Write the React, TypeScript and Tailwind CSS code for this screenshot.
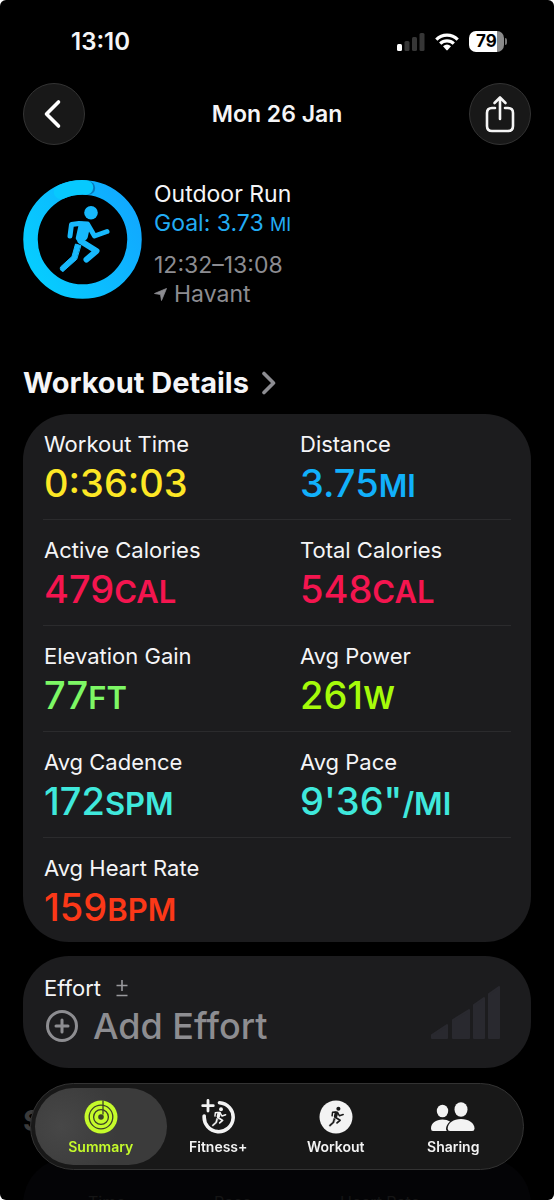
import React from "react";

const METRICS = [
  { label: "Workout Time", value: "0:36:03", unit: "", color: "text-[#fde725]" },
  { label: "Distance", value: "3.75", unit: "MI", color: "text-[#11b0fb]" },
  { label: "Active Calories", value: "479", unit: "CAL", color: "text-[#f4154f]" },
  { label: "Total Calories", value: "548", unit: "CAL", color: "text-[#f4154f]" },
  { label: "Elevation Gain", value: "77", unit: "FT", color: "text-[#7df765]" },
  { label: "Avg Power", value: "261", unit: "W", color: "text-[#a6fb0a]" },
  { label: "Avg Cadence", value: "172", unit: "SPM", color: "text-[#3fe8dc]" },
  { label: "Avg Pace", value: "9'36\"", unit: "/MI", color: "text-[#3fe8dc]" },
  { label: "Avg Heart Rate", value: "159", unit: "BPM", color: "text-[#fb3818]" },
];

function Runner() {
  return (
    <g fill="none" stroke="currentColor" strokeLinecap="round" strokeLinejoin="round">
      <circle cx="68" cy="32.700" r="6.800" fill="currentColor" stroke="none" />
      <path d="M47 56 L48.500 44.500 L56 43.500 L64.500 44 L71.500 56 L84 51.500" strokeWidth="5" />
      <path d="M58.500 44.500 L64.500 46 L62 57 L57.500 60.500 L55.500 58 Z" strokeWidth="5.500" fill="currentColor" />
      <path d="M57.500 61 L73.500 71 L63.500 79.500" strokeWidth="6" />
      <path d="M57.500 65.500 L52.500 64 L49 76.500 L37.500 87 Q36.500 90.500 40 91.500 L53.500 79.500 Z" strokeWidth="1" fill="currentColor" />
    </g>
  );
}

function StatusBar() {
  return (
    <div className="flex h-[83px] items-center justify-between pr-[47px] pl-[71px]">
      <span className="text-[24px] font-semibold">13:10</span>
      <div className="flex items-center gap-[10px]">
        <svg width="28" height="20" viewBox="0 0 28 20" aria-label="Mobile signal">
          <rect x="0" y="12" width="5" height="7" rx="1.500" fill="#fff" />
          <g fill="#363636">
            <rect x="7.500" y="9" width="5" height="10" rx="1.500" />
            <rect x="15" y="5" width="5" height="14" rx="1.500" />
            <rect x="22.500" y="1" width="5" height="18" rx="1.500" />
          </g>
        </svg>
        <svg width="24" height="18" viewBox="0 0 24 18" aria-label="Wi-Fi">
          <g fill="none" stroke="#fff" strokeWidth="3.200">
            <path d="M1.300 6.600 A15.200 15.200 0 0 1 22.700 6.600" />
            <path d="M5.200 10.600 A9.700 9.700 0 0 1 18.800 10.600" />
          </g>
          <path d="M8 13.300 Q12 9.800 16 13.300 L12.700 17.100 Q12 17.700 11.300 17.100 Z" fill="#fff" />
        </svg>
        <div className="flex items-center gap-px" aria-label="Battery 79 percent">
          <div className="flex h-[21px] w-[35px] items-center justify-center rounded-[7px] bg-[linear-gradient(90deg,#fff_79%,#8a8a8a_79%)] text-[17px] font-bold text-black">
            79
          </div>
          <div className="h-[7px] w-[2px] rounded-r-full bg-[#777]" />
        </div>
      </div>
    </div>
  );
}

function Header() {
  const round =
    "flex size-[62px] items-center justify-center rounded-full border border-[#333] bg-[#181818]";
  return (
    <header className="flex items-center justify-between">
      <button type="button" aria-label="Back" className={round}>
        <svg width="20" height="32" viewBox="0 0 20 32" className="mr-[4px]">
          <path d="M16.500 4 L4.500 16 L16.500 28" fill="none" stroke="#fff" strokeWidth="3.600" strokeLinecap="round" strokeLinejoin="round" />
        </svg>
      </button>
      <h1 className="text-[23px] font-semibold">Mon 26 Jan</h1>
      <button type="button" aria-label="Share" className={round}>
        <svg width="30" height="38" viewBox="0 0 30 38" fill="none" stroke="#f5f5f5" strokeWidth="2.600" strokeLinecap="round" strokeLinejoin="round">
          <path d="M10 13 H7 Q2 13 2 18 V31 Q2 36 7 36 H23 Q28 36 28 31 V18 Q28 13 23 13 H20" />
          <path d="M15 24 V2.500 M9.500 8 L15 2.500 L20.500 8" />
        </svg>
      </button>
    </header>
  );
}

function WorkoutSummary() {
  return (
    <section className="mt-[35px] flex gap-[12px]">
      <svg viewBox="0 0 119 119" className="size-[119px] shrink-0 text-[#17b9fd]" aria-label="Goal completed">
        <defs>
          <linearGradient id="ring" x1="0" y1=".7" x2="1" y2=".2">
            <stop offset="0" stopColor="#06ccff" />
            <stop offset="1" stopColor="#11a9ff" />
          </linearGradient>
        </defs>
        <circle cx="59.500" cy="59.500" r="52" fill="none" stroke="url(#ring)" strokeWidth="14.500" />
        <circle cx="65.500" cy="8" r="6.700" fill="#0879bd" />
        <path d="M38 12 A52 52 0 0 1 63 7.500" fill="none" stroke="#07c9fe" strokeWidth="14.500" strokeLinecap="round" />
        <Runner />
      </svg>
      <div className="text-[23px] leading-[29px]">
        <p>Outdoor Run</p>
        <p className="text-[#22acf4]">
          Goal: 3.73 <span className="text-[18px]">MI</span>
        </p>
        <p className="mt-[12px] text-[#8c8c91]">12:32–13:08</p>
        <p className="flex items-center gap-[7px] text-[#8c8c91]">
          <svg width="13" height="13" viewBox="0 0 13 13" aria-hidden="true">
            <path d="M12.500 0.500 L7.500 12.500 L6.500 6.500 L0.500 5.500 Z" fill="currentColor" stroke="currentColor" strokeWidth=".8" strokeLinejoin="round" />
          </svg>
          Havant
        </p>
      </div>
    </section>
  );
}

function WorkoutDetails() {
  return (
    <section className="mt-[57px]">
      <h2 className="text-[29px] leading-[34px] font-bold">
        <a href="#details" className="flex items-center gap-[13px]">
          Workout Details
          <svg width="14" height="24" viewBox="0 0 14 24" aria-hidden="true">
            <path d="M2 2.500 L11.500 12 L2 21.500" fill="none" stroke="#8d8d92" strokeWidth="3.600" strokeLinecap="round" strokeLinejoin="round" />
          </svg>
        </a>
      </h2>
      <dl className="mt-[14px] grid grid-cols-2 rounded-[46px] bg-[#1c1c1e] px-[20px]">
        {METRICS.map((m, i) => (
          <div
            key={m.label}
            className={
              "pt-[17px] " +
              (i < 8 ? "h-[106px] border-b border-[#2b2b2d]" : "h-[104px]") +
              (i % 2 ? " pl-[23px]" : " pl-px")
            }
          >
            <dt className="text-[22px] leading-[27px]">{m.label}</dt>
            <dd className={"text-[38px] leading-[50px] font-medium " + m.color}>
              {m.value}
              <span className="text-[31px] font-semibold">{m.unit}</span>
            </dd>
          </div>
        ))}
      </dl>
    </section>
  );
}

function Effort() {
  return (
    <section className="mt-[14px] flex h-[112px] items-center justify-between rounded-[46px] bg-[#1c1c1e] pr-[31px] pl-[21px]">
      <div>
        <h2 className="flex items-center gap-[15px] text-[22px] leading-[28px]">
          Effort
          <svg width="12" height="18" viewBox="0 0 12 18" fill="none" stroke="#9a9a9e" strokeWidth="1.600" aria-label="plus or minus">
            <path d="M6 1 V12 M.5 6.500 H11.500 M.5 16.500 H11.500" />
          </svg>
        </h2>
        <button type="button" className="flex items-center gap-[13px] text-[36px] leading-[48px] font-medium text-[#8d8d91]">
          <svg width="36" height="36" viewBox="0 0 36 36" fill="none" stroke="currentColor" strokeWidth="3" strokeLinecap="round">
            <circle cx="18" cy="18" r="14.500" />
            <path d="M18 12 V24 M12 18 H24" />
          </svg>
          Add Effort
        </button>
      </div>
      <svg width="69" height="53" viewBox="0 0 69 53" fill="#29292f" stroke="#29292f" strokeWidth="2" strokeLinejoin="round" aria-hidden="true">
        <path d="M1 49 L16 39 V52 H1 Z" />
        <path d="M22 34 L38 24 V52 H22 Z" />
        <path d="M43 19 L53 12 V52 H43 Z" />
        <path d="M58 8 L68 1 V52 H58 Z" />
      </svg>
    </section>
  );
}

function SummaryIcon() {
  return (
    <svg width="34" height="34" viewBox="0 0 34 34" aria-hidden="true">
      <circle cx="17" cy="17" r="16.500" fill="#c5fb2b" />
      <g fill="none" stroke="#3b3f2a" strokeWidth="1.300">
        <circle cx="17" cy="17" r="11.800" />
        <circle cx="17" cy="17" r="7.400" />
        <path d="M19 .500 V14.500" />
      </g>
      <circle cx="17" cy="17" r="2.800" fill="#3b3f2a" />
    </svg>
  );
}

function FitnessIcon() {
  return (
    <svg width="34" height="36" viewBox="0 0 34 36" className="text-[#f3f3f3]" aria-hidden="true">
      <g fill="none" stroke="currentColor" strokeLinecap="round">
        <path d="M18.500 3.700 A14.500 14.500 0 1 1 3.200 17" strokeWidth="3.600" />
        <path d="M7 1.500 V12 M1.700 6.700 H12.300" strokeWidth="2.800" />
      </g>
      <g transform="translate(.3 .8) scale(.29)">
        <Runner />
      </g>
    </svg>
  );
}

function WorkoutIcon() {
  return (
    <svg width="34" height="34" viewBox="0 0 34 34" className="text-[#1a1a1a]" aria-hidden="true">
      <circle cx="17" cy="17" r="16.500" fill="#f3f3f3" />
      <g transform="translate(-1 -1) scale(.3)">
        <Runner />
      </g>
    </svg>
  );
}

function SharingIcon() {
  return (
    <svg width="46" height="32" viewBox="0 0 46 32" fill="#f3f3f3" aria-hidden="true">
      <ellipse cx="12.500" cy="10" rx="5.700" ry="6.300" />
      <path d="M17 30 H3 Q1 30 1 27.500 C1 22 6 18.500 12.500 18.500 Q17 18.500 20 20.500 Q16 24 16 28 Q16 29.500 17 30 Z" />
      <ellipse cx="31" cy="8.500" rx="6.500" ry="7.300" />
      <path d="M20 30 Q17.700 30 17.700 27.500 C17.700 22 23.500 18 31 18 C38.500 18 44.500 22 44.500 27.500 Q44.500 30 42.200 30 Z" />
    </svg>
  );
}

const TABS = [
  { name: "Summary", icon: SummaryIcon },
  { name: "Fitness+", icon: FitnessIcon },
  { name: "Workout", icon: WorkoutIcon },
  { name: "Sharing", icon: SharingIcon },
];

function TabBar() {
  return (
    <nav className="fixed inset-x-[30px] bottom-[30px] grid grid-cols-4 rounded-full border border-[#333] bg-[#191919]/95 px-[11px] py-[4px] backdrop-blur-xs">
      {TABS.map(({ name, icon: Icon }, i) => (
        <a
          key={name}
          href={"#" + name.toLowerCase()}
          aria-current={i === 0 ? "page" : undefined}
          className={
            "flex h-[77px] flex-col items-center rounded-full pt-[11px] text-[14px] leading-[18px] font-semibold " +
            (i === 0
              ? "-mx-[7px] bg-[radial-gradient(circle_at_20%_50%,#474747,#3b3b3b_50%)] text-[#c5fb2b]"
              : "text-[#f3f3f3]")
          }
        >
          <span className="flex h-[36px] items-center">
            <Icon />
          </span>
          <span className="mt-[3px]">{name}</span>
        </a>
      ))}
    </nav>
  );
}

export default function App() {
  return (
    <div className="h-screen overflow-hidden bg-white font-[Inter,sans-serif] text-[#f5f5f7]">
      <div className="h-full overflow-hidden rounded-[6px] bg-black">
        <StatusBar />
        <main className="px-[23px]">
          <Header />
          <WorkoutSummary />
          <WorkoutDetails />
          <Effort />
          <section className="mt-[36px] text-[#3a3a3a]">
            <h2 className="text-[29px] leading-[34px] font-bold">Splits</h2>
            <div className="mt-[20px] grid h-[100px] grid-cols-3 rounded-[46px] bg-[#040406] px-[65px] pt-[32px] text-[#151515]">
              <span>Time</span>
              <span>Pace</span>
              <span>Heart Rate</span>
            </div>
          </section>
        </main>
        <TabBar />
      </div>
    </div>
  );
}
